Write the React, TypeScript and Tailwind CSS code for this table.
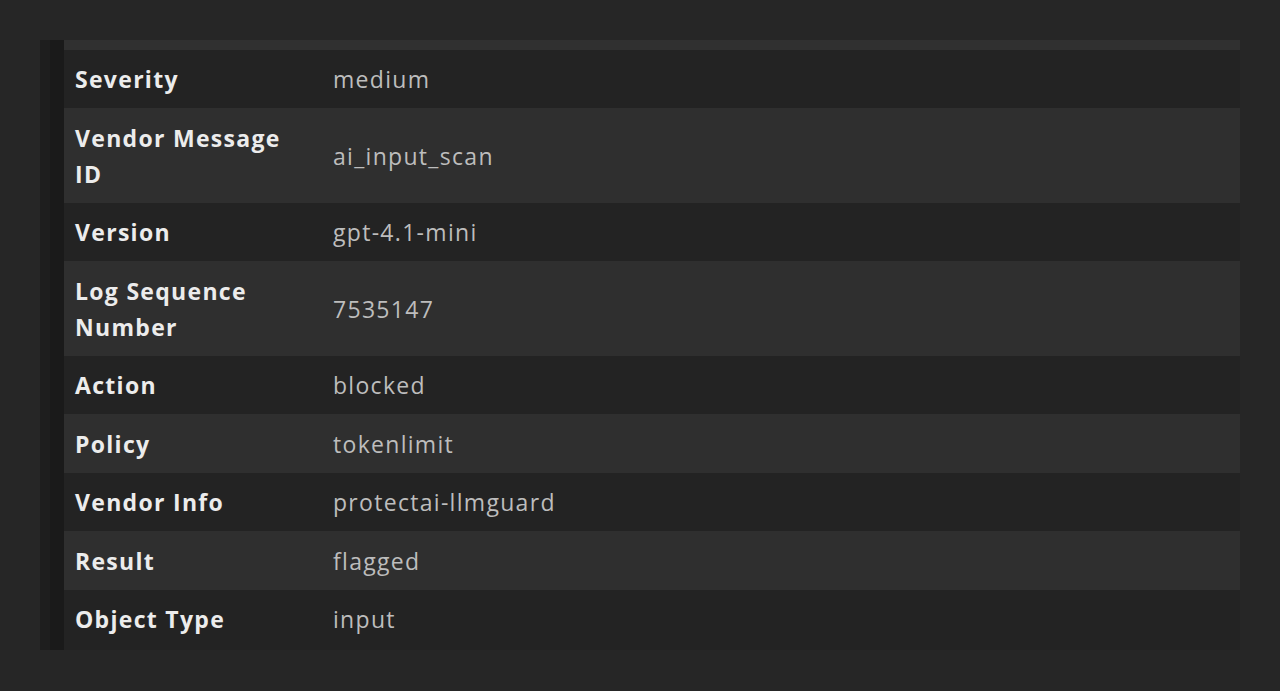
import React from "react";

const rows: { label: string; value: string; alt: boolean }[] = [
  { label: "Severity", value: "medium", alt: false },
  { label: "Vendor Message ID", value: "ai_input_scan", alt: true },
  { label: "Version", value: "gpt-4.1-mini", alt: false },
  { label: "Log Sequence Number", value: "7535147", alt: true },
  { label: "Action", value: "blocked", alt: false },
  { label: "Policy", value: "tokenlimit", alt: true },
  { label: "Vendor Info", value: "protectai-llmguard", alt: false },
  { label: "Result", value: "flagged", alt: true },
  { label: "Object Type", value: "input", alt: false },
];

export default function App() {
  return (
    <div
      className="w-[1280px] h-[691px] bg-[#262626] pt-[40px] px-[40px]"
      style={{ fontFamily: '"Open Sans", "Noto Sans", sans-serif' }}
    >
      <div className="flex">
        <div className="w-[24px] flex shrink-0">
          <div className="w-[10px] bg-[#1e1e1e]" />
          <div className="w-[14px] bg-[#1a1a1a]" />
        </div>
        <div className="flex-1 flex flex-col">
          <div className="h-[10px] bg-[#303030]" />
          {rows.map((r) => (
            <div
              key={r.label}
              className={`flex items-center ${
                r.alt ? "bg-[#2f2f2f] py-[11.5px]" : "bg-[#232323] py-[11px]"
              }`}
            >
              <div className="w-[258px] shrink-0 pl-[11px] pr-[22px] text-[23px] leading-[36px] tracking-[1.3px] font-bold text-[#ececec]">
                {r.label}
              </div>
              <div className="pl-[11px] text-[23px] leading-[36px] tracking-[1.3px] text-[#bdbdbd]">
                {r.value}
              </div>
            </div>
          ))}
          <div className="h-[2px] bg-[#232323]" />
        </div>
      </div>
    </div>
  );
}
